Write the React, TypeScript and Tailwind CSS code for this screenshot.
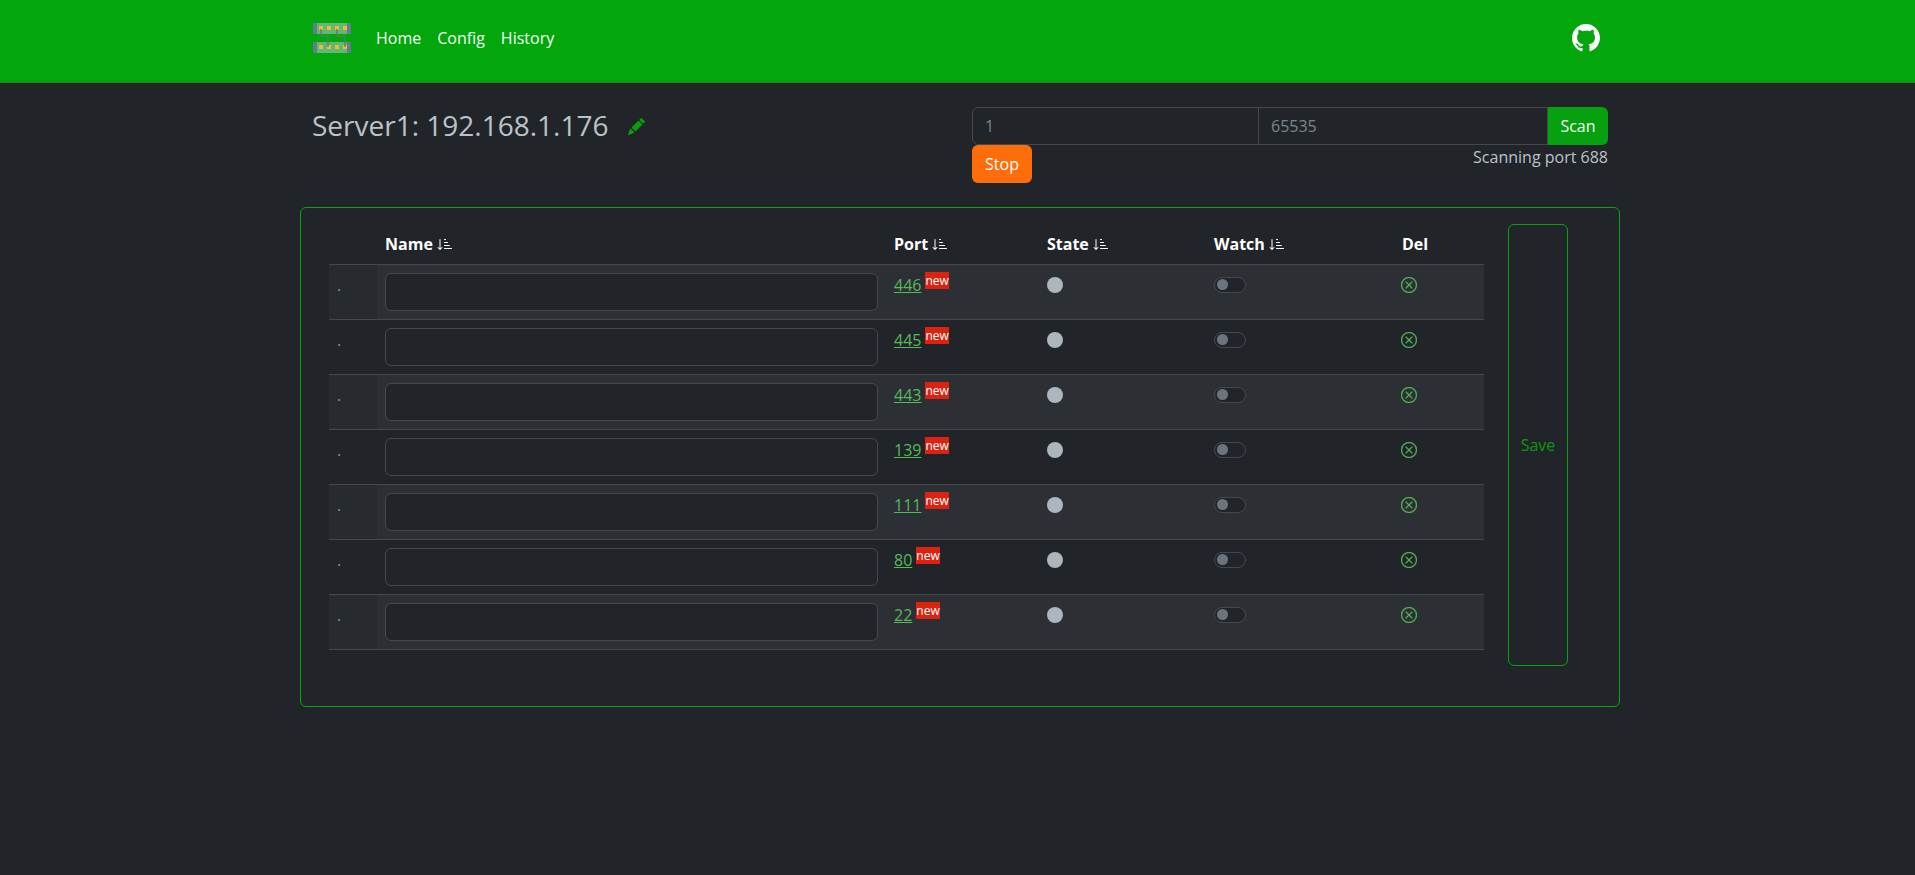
import { BsGithub, BsPencilFill, BsSortDownAlt, BsXCircle } from "react-icons/bs";

const ports: string[] = ["446", "445", "443", "139", "111", "80", "22"];

function Logo() {
  const xs = [8, 16, 24, 32];
  return (
    <svg width="40" height="32" viewBox="0 0 40 32" className="shrink-0">
      {[1, 20].map((y) => (
        <g key={y}>
          <rect x="1" y={y} width="38" height="11" fill="#5fb878" />
          <rect x="1" y={y} width="4" height="11" fill="#5f7f8f" />
          <rect x="35" y={y} width="4" height="11" fill="#5f7f8f" />
          {xs.map((x) => (
            <rect key={x} x={x - 1} y={y + 3} width="4" height="4" fill="#fbb82d" />
          ))}
        </g>
      ))}
      <path d="M9 7V14H16V25M25 7V14H33V25" fill="none" stroke="#4f7f5f" strokeWidth="1.3" />
    </svg>
  );
}

function SortHead({ label }: { label: string }) {
  return (
    <span className="inline-flex items-center gap-[4px]">
      {label}
      <BsSortDownAlt className="w-[16px] h-[16px]" />
    </span>
  );
}

export default function App() {
  return (
    <div
      className="min-h-screen overflow-hidden bg-[#212529] text-[16px] leading-[24px] text-[#bcc2c8]"
      style={{ fontFamily: '"Open Sans", sans-serif' }}
    >
      <nav className="h-[83px] bg-[#03a70c] border-b border-[#0a9010] pb-[7px]">
        <div className="w-[1296px] ml-[312px] h-full flex items-center text-[#f4fff4]">
          <Logo />
          <div className="flex gap-[16px] ml-[24px]">
            <span>Home</span>
            <span>Config</span>
            <span>History</span>
          </div>
          <BsGithub className="ml-auto mr-[8px] w-[28px] h-[28px] text-white" />
        </div>
      </nav>

      <main className="w-[1320px] ml-[300px] pt-[24px]">
        <div className="flex justify-between w-[1296px] mx-auto">
          <div className="flex items-start">
            <h3 className="text-[28px] leading-[34px] text-[#bcc2c8] font-normal mt-[1px]">Server1: 192.168.1.176</h3>
            <BsPencilFill className="ml-[20px] mt-[11px] w-[17px] h-[17px] text-[#0a9f10]" />
          </div>
          <div className="w-[636px]">
            <div className="flex h-[38px]">
              <div className="w-[287px] border border-[#45494d] rounded-l-[6px] px-[12px] py-[6px] text-[#7d858c] bg-[#212529]">1</div>
              <div className="flex-1 border border-l-0 border-[#45494d] px-[12px] py-[6px] text-[#7d858c] bg-[#212529]">65535</div>
              <button className="w-[60px] bg-[#07a00f] text-[#f4fff4] rounded-r-[6px]">Scan</button>
            </div>
            <div className="flex justify-between">
              <button className="w-[60px] h-[38px] bg-[#fd6e0b] text-white rounded-[6px]">Stop</button>
              <span>Scanning port 688</span>
            </div>
          </div>
        </div>

        <section className="mt-[24px] h-[500px] border border-[#0aa50f] rounded-[6px] pt-[16px] pl-[28px] flex">
          <table className="table-fixed w-[1155px] h-[425px] border-collapse self-start">
            <colgroup>
              <col className="w-[48px]" />
              <col className="w-[509px]" />
              <col className="w-[153px]" />
              <col className="w-[167px]" />
              <col className="w-[188px]" />
              <col className="w-[90px]" />
            </colgroup>
            <thead>
              <tr className="h-[40px] border-b border-[#45494d] text-white font-bold text-left">
                <th />
                <th className="px-[8px]"><SortHead label="Name" /></th>
                <th className="px-[8px]"><SortHead label="Port" /></th>
                <th className="px-[8px]"><SortHead label="State" /></th>
                <th className="px-[8px]"><SortHead label="Watch" /></th>
                <th className="px-[8px]">Del</th>
              </tr>
            </thead>
            <tbody>
              {ports.map((port, i) => (
                <tr key={port} className={`h-[55px] border-b border-[#45494d] align-top ${i % 2 === 0 ? "bg-[#2c3034]" : ""}`}>
                  <td className={`p-[8px] text-[#8a8f94] ${i % 2 === 0 ? "bg-[#272b2f]" : ""}`}>.</td>
                  <td className="p-[8px]">
                    <div className="h-[38px] bg-[#212529] border border-[#45494d] rounded-[6px]" />
                  </td>
                  <td className="p-[8px]">
                    <a className="text-[#56b95a] underline">{port}</a>
                    <span className="relative -top-[6px] ml-[4px] inline-block bg-[#dc2311] text-white text-[12px] leading-[17px]">new</span>
                  </td>
                  <td className="p-[8px] pt-[12px]">
                    <div className="w-[16px] h-[16px] rounded-full bg-[#adb5bd]" />
                  </td>
                  <td className="p-[8px] pt-[12px]">
                    <div className="w-[32px] h-[16px] rounded-full border border-[#45494d] bg-[#212529] flex items-center pl-[2px]">
                      <div className="w-[11px] h-[11px] rounded-full bg-[#6c757d]" />
                    </div>
                  </td>
                  <td className="p-[8px] pt-[12px]">
                    <BsXCircle className="w-[16px] h-[16px] text-[#56b95a] -ml-[1px]" stroke="currentColor" strokeWidth={0.3} />
                  </td>
                </tr>
              ))}
            </tbody>
          </table>
          <button className="ml-[24px] w-[60px] h-[442px] border border-[#0a9f10] rounded-[6px] text-[#0a9a0f]">Save</button>
        </section>
      </main>
    </div>
  );
}
